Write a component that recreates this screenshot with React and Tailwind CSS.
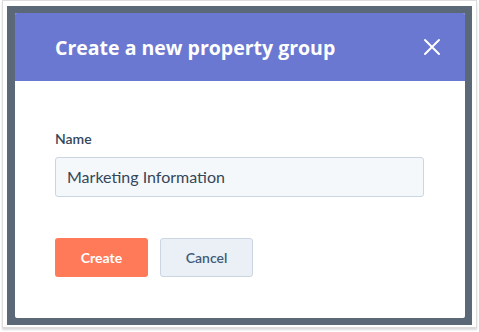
export default function App() {
  return (
    <div className="w-[479px] h-[332px] bg-white" style={{ fontFamily: "Lato, 'Noto Sans', sans-serif" }}>
      <div className="ml-[2px] w-[475px] h-[328px] border border-[#dcdcdc] pl-[4px] pt-[5px] shadow-[0_2px_2px_rgba(0,0,0,0.15)]">
        <div className="w-[465px] h-[319px] bg-[#5b6878] pl-[8px] pt-[7px]">
          <div className="w-[450px] h-[305px] bg-white rounded-[2px] flex flex-col">
            <div className="h-[68px] bg-[#6a78d1] rounded-t-[2px] flex items-center justify-between pl-[40px] pr-[24px]">
              <h1 className="text-white text-[19.5px] font-bold pt-[1px]" style={{ fontFamily: "'Open Sans', sans-serif" }}>Create a new property group</h1>
              <svg width="18" height="18" viewBox="0 0 18 18">
                <path d="M2 2 L16 16 M16 2 L2 16" stroke="white" strokeWidth="2" strokeLinecap="round" />
              </svg>
            </div>
            <div className="pl-[40px] pt-[49px]">
              <label className="block text-[14px] font-semibold text-[#33475b] leading-[18px]">Name</label>
              <div className="mt-[9px] w-[369px] h-[40px] bg-[#f5f8fa] border border-[#cbd6e2] rounded-[3px] flex items-center px-[11px] text-[16px] text-[#33475b]">
                Marketing Information
              </div>
              <div className="mt-[41px] flex gap-[12px]">
                <button className="w-[93px] h-[39px] bg-[#ff7a59] rounded-[3px] text-white text-[14px] font-bold">Create</button>
                <button className="w-[93px] h-[39px] bg-[#eaf0f6] border border-[#cbd6e2] rounded-[3px] text-[#425b76] text-[14px] font-semibold">Cancel</button>
              </div>
            </div>
          </div>
        </div>
      </div>
    </div>
  );
}
